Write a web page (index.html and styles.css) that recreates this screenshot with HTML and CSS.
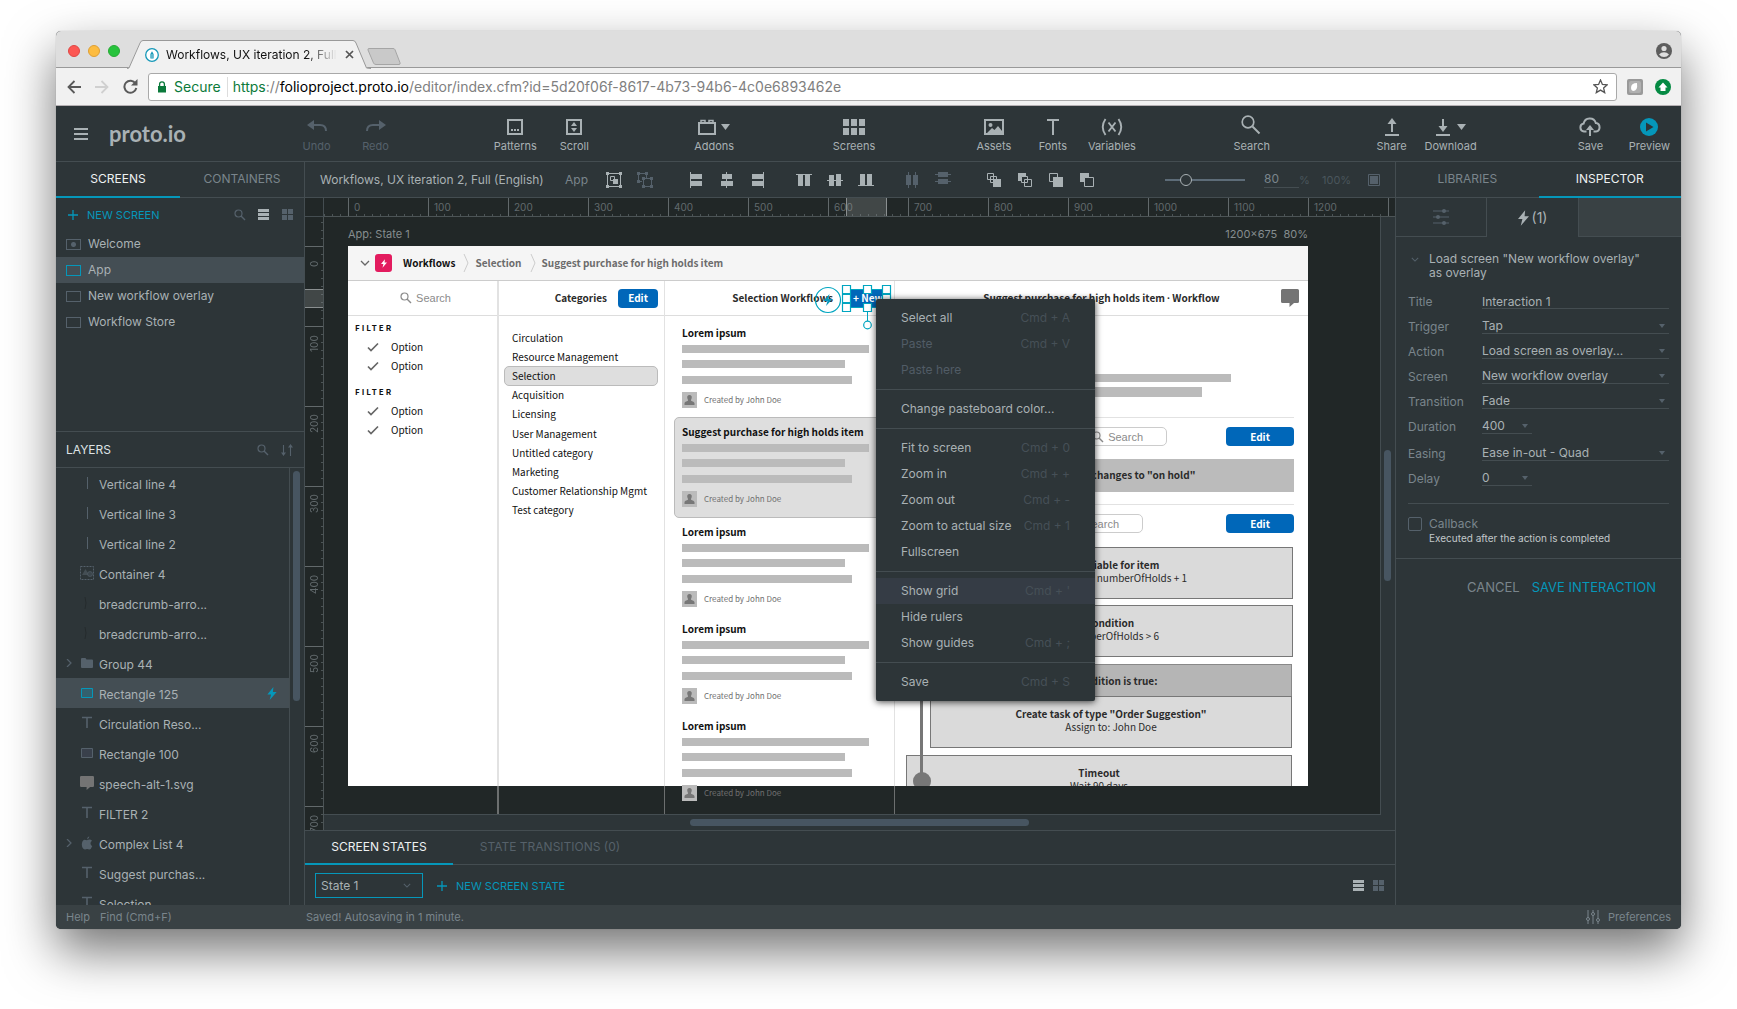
FILE: index.html
```html
<!DOCTYPE html>
<html lang="en">
<head>
<meta charset="utf-8">
<title>Workflows, UX iteration 2, Full (English)</title>
<link rel="stylesheet" href="styles.css">
</head>
<body>
<svg class="defs" aria-hidden="true">
  <symbol id="i-search" viewBox="0 0 12 12"><circle cx="4.5" cy="4.5" r="3.5" fill="none" stroke="currentColor" stroke-width="1.2"/><path d="M7 7l4 4" stroke="currentColor" stroke-width="1.4"/></symbol>
  <symbol id="i-list" viewBox="0 0 12 12"><path d="M0 0h11v3H0zM0 4h11v3H0zM0 8h11v3H0z" fill="currentColor"/></symbol>
  <symbol id="i-grid" viewBox="0 0 12 12"><path d="M0 0h5v5H0zM6 0h5v5H6zM0 6h5v5H0zM6 6h5v5H6z" fill="currentColor"/></symbol>
  <symbol id="i-bolt" viewBox="0 0 10 14"><path d="M6.5 0L0 8h4l-1.5 6L10 5.5H6z" fill="currentColor"/></symbol>
  <symbol id="i-plus" viewBox="0 0 10 10"><path d="M5 0v10M0 5h10" stroke="currentColor" stroke-width="1.3"/></symbol>
  <symbol id="i-down" viewBox="0 0 10 6"><path d="M1 1l4 4 4-4" fill="none" stroke="currentColor" stroke-width="1.3"/></symbol>
  <symbol id="i-text" viewBox="0 0 14 14"><path d="M2 1.5h10M7 1.5V12" fill="none" stroke="currentColor" stroke-width="1.6"/></symbol>
  <symbol id="i-check" viewBox="0 0 12 10"><path d="M1 5.5L4 8.5L11 1.5" fill="none" stroke="currentColor" stroke-width="1.7"/></symbol>
  <symbol id="i-crumb" viewBox="0 0 6 18"><path d="M1 0l4 9-4 9" fill="none" stroke="currentColor" stroke-width="1"/></symbol>
  <symbol id="i-user" viewBox="0 0 15 16"><path d="M0 0h15v16H0z" fill="#bbb"/><path d="M7.500 3c2 0 2.500 1.400 2.200 3-.2 1-.7 1.500-.7 2.300 0 1.200 3.500 1.200 3.500 3V13h-10v-1.700c0-1.800 3.500-1.800 3.500-3C6 7.500 5.500 7 5.300 6 5 4.400 5.500 3 7.500 3z" fill="#777"/></symbol>
  <symbol id="i-speech" viewBox="0 0 18 18"><path d="M1.500 0h15Q18 0 18 1.500v11Q18 14 16.500 14H13l-4.500 4V14h-7Q0 14 0 12.500v-11Q0 0 1.500 0z" fill="currentColor"/></symbol>
</svg>

<div class="window">
  <header class="chrome">
    <div class="tabstrip">
      <div class="lights"><i class="red"></i><i class="amber"></i><i class="green"></i></div>
      <div class="tab">
        <svg class="tab-shape" viewBox="0 0 244 29" preserveAspectRatio="none" aria-hidden="true"><path d="M0 28.500Q2 28 3 26L12.500 3Q13.500.5 16 .5H226q2 0 3 2.500l9.500 23q1.500 2.500 5 2.500V29H0z" fill="#f1f1f1" stroke="none"/><path d="M0 28.500L2 28L13 3Q14 .5 16 .5H226q2 0 3 2.500l10.500 25 4.500.5" fill="none" stroke="#999"/></svg>
        <svg class="fav" viewBox="0 0 14 14" width="14" height="14"><circle cx="7" cy="7" r="6.300" fill="#fff" stroke="#1598b8" stroke-width="1.300"/><path d="M5.400 10.500V6L7 3.200 8.600 6v4.500z" fill="#1598b8"/><path d="M7 6v4" stroke="#fff" stroke-width=".6"/></svg>
        <span class="tab-title">Workflows, UX iteration 2, Full</span>
        <button class="plain tab-close" aria-label="Close tab"><svg width="9" height="9" viewBox="0 0 9 9"><path d="M1 1l7 7M8 1L1 8" stroke="#555" stroke-width="1.700"/></svg></button>
      </div>
      <button class="plain newtab" aria-label="New tab"><svg width="34" height="17" viewBox="0 0 34 17"><path d="M2 .5h24q1.500 0 2 1.200l5 13q.6 1.800-1 1.800H9q-1.800 0-2.500-1.500L1 2Q.6.5 2 .5z" fill="#c9c9c9" stroke="#a5a5a5"/></svg></button>
      <svg class="profile" width="16" height="16" viewBox="0 0 16 16"><circle cx="8" cy="8" r="8" fill="#5d5d5d"/><circle cx="8" cy="5.500" r="2.600" fill="#dedede"/><path d="M3 11.500Q5 9.300 8 9.300t5 2.200Q11 14 8 14t-5-2.500z" fill="#dedede"/></svg>
    </div>
    <div class="navbar">
      <button class="plain" aria-label="Back"><svg width="14" height="14" viewBox="0 0 14 14"><path d="M14 7H1.500M7.500 1L1.500 7l6 6" fill="none" stroke="#5a5a5a" stroke-width="1.800"/></svg></button>
      <button class="plain" aria-label="Forward"><svg width="14" height="14" viewBox="0 0 14 14"><path d="M0 7h12.500M6.500 1l6 6-6 6" fill="none" stroke="#d0d0d0" stroke-width="1.800"/></svg></button>
      <button class="plain" aria-label="Reload"><svg width="15" height="15" viewBox="0 0 15 15"><path d="M12.500 4.500A6 6 0 1 0 13.300 9" fill="none" stroke="#5a5a5a" stroke-width="2"/><path d="M14.500 0v6.500H8z" fill="#5a5a5a"/></svg></button>
      <div class="omnibox">
        <svg width="10" height="12" viewBox="0 0 10 12"><path d="M1 5h8v6.500H1z" fill="#0b7a3b"/><path d="M2.600 5.500V3.200a2.400 2.400 0 0 1 4.800 0v2.300" fill="none" stroke="#0b7a3b" stroke-width="1.300"/></svg>
        <span class="secure">Secure</span>
        <span class="url"><b>https</b>://<em>folioproject.proto.io</em>/editor/index.cfm?id=5d20f06f-8617-4b73-94b6-4c0e6893462e</span>
        <svg width="15" height="15" viewBox="0 0 15 15"><path d="M7.500 1l1.900 4.400 4.800.4-3.600 3.100 1.100 4.700-4.200-2.500-4.200 2.500 1.100-4.700L.8 5.800l4.800-.4z" fill="none" stroke="#555" stroke-width="1.300"/></svg>
      </div>
      <svg width="16" height="16" viewBox="0 0 16 16"><rect width="16" height="16" rx="2" fill="#999"/><rect x="2" y="2" width="12" height="12" rx="2" fill="#b0b0b0"/><path d="M4 9Q4 4 10 4q1 8-4 8-2-.5-2-3z" fill="#fff"/></svg>
      <svg width="16" height="16" viewBox="0 0 16 16"><circle cx="8" cy="8" r="8" fill="#058a43"/><path d="M8 3.500l4.500 5H10.500v3.500h-5V8.500h-2z" fill="#fff"/></svg>
    </div>
  </header>

  <div class="topbar">
    <div class="brand">
      <button class="plain" aria-label="Menu"><svg width="14" height="12" viewBox="0 0 14 12"><path d="M0 1h14M0 6h14M0 11h14" stroke="#a9b1b4" stroke-width="2"/></svg></button>
      <span class="logo">proto.io</span>
    </div>
    <nav class="tools">
      <div class="group">
        <button class="tool off"><svg width="20" height="20" viewBox="0 0 20 20"><path d="M0 8l7-5v10z" fill="currentColor"/><path d="M6 8h7q6 0 6 6" fill="none" stroke="currentColor" stroke-width="2"/></svg>Undo</button>
        <button class="tool off"><svg width="20" height="20" viewBox="0 0 20 20"><path d="M20 8l-7-5v10z" fill="currentColor"/><path d="M14 8H7q-6 0-6 6" fill="none" stroke="currentColor" stroke-width="2"/></svg>Redo</button>
      </div>
      <div class="group">
        <button class="tool"><svg width="20" height="20" viewBox="0 0 20 20"><path d="M3 3h14v14H3z" fill="none" stroke="currentColor" stroke-width="2"/><path d="M6 12h2v2H6zM9 12h2v2H9zM12 12h2v2h-2z" fill="currentColor"/></svg>Patterns</button>
        <button class="tool"><svg width="20" height="20" viewBox="0 0 20 20"><path d="M3 3h14v14H3z" fill="none" stroke="currentColor" stroke-width="2"/><path d="M10 5l3 4H7zM10 15l3-4H7z" fill="currentColor"/></svg>Scroll</button>
      </div>
      <div class="group">
        <button class="tool"><svg width="32" height="20" viewBox="0 0 32 20"><path d="M1 6h16v11H1z" fill="none" stroke="currentColor" stroke-width="2"/><path d="M3 5V3.500h4V5M11 5V3.500h4V5" fill="none" stroke="currentColor" stroke-width="1.500"/><path d="M23 7h9l-4.500 6z" fill="currentColor"/></svg>Addons</button>
      </div>
      <div class="group">
        <button class="tool"><svg width="22" height="20" viewBox="0 0 22 20"><path d="M0 2h6v7H0zM8 2h6v7H8zM16 2h6v7h-6zM0 11h6v7H0zM8 11h6v7H8zM16 11h6v7h-6z" fill="currentColor"/></svg>Screens</button>
      </div>
      <div class="group">
        <button class="tool"><svg width="20" height="20" viewBox="0 0 20 20"><path d="M1 3h18v14H1z" fill="none" stroke="currentColor" stroke-width="2"/><circle cx="6.500" cy="8" r="2" fill="currentColor"/><path d="M3 16l5-5 2.500 2L14 9l4 5v2z" fill="currentColor"/></svg>Assets</button>
        <button class="tool"><svg width="12" height="20" viewBox="0 0 12 20"><path d="M0 3h12M6 3v15" stroke="currentColor" stroke-width="2"/></svg>Fonts</button>
        <button class="tool"><svg width="22" height="20" viewBox="0 0 22 20"><path d="M4.500 2Q-1 10 4.500 18M17.500 2Q23 10 17.500 18M7.500 5.500l7 9M14.500 5.500l-7 9" fill="none" stroke="currentColor" stroke-width="1.900"/></svg>Variables</button>
      </div>
      <div class="group">
        <button class="tool"><svg width="20" height="20" viewBox="0 0 20 20"><circle cx="6" cy="5" r="5.800" fill="none" stroke="currentColor" stroke-width="1.700"/><path d="M10.500 9.500l7 7" stroke="currentColor" stroke-width="2"/></svg>Search</button>
      </div>
      <div class="group">
        <button class="tool"><svg width="16" height="20" viewBox="0 0 16 20"><path d="M1 18h14M8 5v10" stroke="currentColor" stroke-width="2"/><path d="M8 1l4.500 6h-9z" fill="currentColor"/></svg>Share</button>
        <button class="tool"><svg width="30" height="20" viewBox="0 0 30 20"><path d="M0 18h14M7 2v9" stroke="currentColor" stroke-width="2"/><path d="M7 15l4.500-6h-9z" fill="currentColor"/><path d="M21 7h9l-4.500 6z" fill="currentColor"/></svg>Download</button>
      </div>
      <div class="group">
        <button class="tool"><svg width="22" height="20" viewBox="0 0 22 20"><path d="M7.500 14.500H5A4 4 0 0 1 4.600 6.600 6.300 6.300 0 0 1 16.800 6a4.300 4.300 0 0 1 .2 8.500h-2.500" fill="none" stroke="currentColor" stroke-width="2"/><path d="M11 19V12" stroke="currentColor" stroke-width="2"/><path d="M11 8l4 5H7z" fill="currentColor"/></svg>Save</button>
        <button class="tool"><svg width="20" height="20" viewBox="0 0 20 20"><circle cx="10" cy="10" r="9" fill="#0597ba"/><path d="M7 5.500v9l7.500-4.500z" fill="#2c3437"/></svg>Preview</button>
      </div>
    </nav>
  </div>

  <div class="body">
    <aside class="left">
      <div class="tabs two"><button class="on">SCREENS</button><button>CONTAINERS</button></div>
      <div class="newrow">
        <button class="add"><svg width="10" height="10"><use href="#i-plus"/></svg>NEW SCREEN</button>
        <svg class="dim" width="12" height="12"><use href="#i-search"/></svg>
        <svg class="lit" width="12" height="12"><use href="#i-list"/></svg>
        <svg class="dim" width="12" height="12"><use href="#i-grid"/></svg>
      </div>
      <ul class="screens">
        <li><i class="frame dot"></i>Welcome</li>
        <li class="sel"><i class="frame"></i>App</li>
        <li><i class="frame"></i>New workflow overlay</li>
        <li><i class="frame"></i>Workflow Store</li>
      </ul>
      <div class="layhead">
        <h2>LAYERS</h2>
        <svg class="dim" width="12" height="12"><use href="#i-search"/></svg>
        <svg class="dim" width="12" height="12" viewBox="0 0 12 12"><path d="M2.500 1v9M9.500 2v10" stroke="currentColor" stroke-width="1.100"/><path d="M0 8.500h5L2.500 12zM7 3.500h5L9.500 0z" fill="currentColor"/></svg>
      </div>
      <div class="layers">
        <ul>
          <li><i></i><b class="vline"></b><span>Vertical line 4</span></li>
          <li><i></i><b class="vline"></b><span>Vertical line 3</span></li>
          <li><i></i><b class="vline"></b><span>Vertical line 2</span></li>
          <li><i></i><svg width="14" height="14" viewBox="0 0 14 14"><path d="M.5.5h13v13H.5z" fill="none" stroke="currentColor" stroke-dasharray="2 1"/><path d="M2 9l3.500-6L9 9z" fill="#444e54"/><circle cx="10" cy="8" r="2.500" fill="#3c464c" stroke="currentColor" stroke-width=".6"/></svg><span>Container 4</span></li>
          <li><i></i><svg width="14" height="14" viewBox="0 0 14 14"><path d="M5 1q2 6 0 12" fill="none" stroke="#252b2d"/></svg><span>breadcrumb-arro...</span></li>
          <li><i></i><svg width="14" height="14" viewBox="0 0 14 14"><path d="M5 1q2 6 0 12" fill="none" stroke="#252b2d"/></svg><span>breadcrumb-arro...</span></li>
          <li><i class="tw"><svg width="6" height="8" viewBox="0 0 6 8"><path d="M1 0l4 4-4 4" fill="none" stroke="currentColor" stroke-width="1.200"/></svg></i><svg width="14" height="14" viewBox="0 0 14 14"><path d="M1 3q0-1 1-1h3.500l1 1.500H12q1 0 1 1V11q0 1-1 1H2q-1 0-1-1z" fill="currentColor"/></svg><span>Group 44</span></li>
          <li class="sel"><i></i><svg width="14" height="14" viewBox="0 0 14 14"><path d="M1.500 2.500h11v9h-11z" fill="#33606e" stroke="#0597ba"/></svg><span>Rectangle 125</span><svg class="zap" width="10" height="13"><use href="#i-bolt"/></svg></li>
          <li><i></i><svg width="14" height="14"><use href="#i-text"/></svg><span>Circulation Reso...</span></li>
          <li><i></i><svg width="14" height="14" viewBox="0 0 14 14"><path d="M1.500 2.500h11v9h-11z" fill="#39404b" stroke="currentColor"/></svg><span>Rectangle 100</span></li>
          <li><i></i><svg class="grey" width="14" height="14"><use href="#i-speech"/></svg><span>speech-alt-1.svg</span></li>
          <li><i></i><svg width="14" height="14"><use href="#i-text"/></svg><span>FILTER 2</span></li>
          <li><i class="tw"><svg width="6" height="8" viewBox="0 0 6 8"><path d="M1 0l4 4-4 4" fill="none" stroke="currentColor" stroke-width="1.200"/></svg></i><svg width="14" height="14" viewBox="0 0 14 14"><path d="M7 4.200Q9 3 10.800 3.800q.8.300 1.200 1Q10.300 6 10.500 7.800q.2 1.700 1.800 2.200-1.300 3.500-3 3.400Q8 12.800 7 12.900t-2 .5Q2 13 1.800 8.500 2 4.500 4.500 3.800 6 3.800 7 4.200zM7 3.500Q7 1 9.300.3 9.500 2.800 7 3.500z" fill="currentColor"/></svg><span>Complex List 4</span></li>
          <li><i></i><svg width="14" height="14"><use href="#i-text"/></svg><span>Suggest purchas...</span></li>
          <li><i></i><svg width="14" height="14"><use href="#i-text"/></svg><span>Selection</span></li>
        </ul>
        <div class="vscroll"><i></i></div>
      </div>
    </aside>

    <main class="center">
      <div class="editbar">
        <span class="doc">Workflows, UX iteration 2, Full (English)</span>
        <span class="crumb">App</span>
        <div class="icons">
          <button aria-label="Group"><svg width="16" height="16" viewBox="0 0 16 16"><path d="M1.500 1.500h13v13h-13z" fill="none" stroke="currentColor"/><path d="M0 0h3v3H0zM13 0h3v3h-3zM0 13h3v3H0zM13 13h3v3h-3zM7 7h5v5H7z" fill="currentColor"/><path d="M4.500 4.500h4v4h-4z" fill="none" stroke="currentColor"/></svg></button>
          <button class="off" aria-label="Ungroup"><svg width="16" height="16" viewBox="0 0 16 16"><path d="M5 9.500H1.500v-8h8V6M6.500 6.500h8v8h-8z" fill="none" stroke="currentColor"/><path d="M0 0h3v3H0zM8 0h3v3H8zM0 8h3v3H0zM5 5h3v3H5zM13 5h3v3h-3zM5 13h3v3H5zM13 13h3v3h-3z" fill="currentColor"/></svg></button>
        </div>
        <div class="icons">
          <button aria-label="Align left"><svg width="12" height="16" viewBox="0 0 12 16"><path d="M0 0h1v16H0zM1 2h11v5H1zM1 9h11v5H1z" fill="currentColor"/></svg></button>
          <button aria-label="Align centre"><svg width="12" height="16" viewBox="0 0 12 16"><path d="M5 0h1v16H5zM1 2h10v5H1zM0 9h12v5H0z" fill="currentColor"/></svg></button>
          <button aria-label="Align right"><svg width="12" height="16" viewBox="0 0 12 16"><path d="M11 0h1v16h-1zM0 2h11v5H0zM0 9h11v5H0z" fill="currentColor"/></svg></button>
        </div>
        <div class="icons near">
          <button aria-label="Align top"><svg width="16" height="12" viewBox="0 0 16 12"><path d="M0 0h16v1H0zM2 1h5v11H2zM9 1h5v11H9z" fill="currentColor"/></svg></button>
          <button aria-label="Align middle"><svg width="16" height="12" viewBox="0 0 16 12"><path d="M0 6h16v1H0zM2 1h5v11H2zM9 0h5v12H9z" fill="currentColor"/></svg></button>
          <button aria-label="Align bottom"><svg width="16" height="12" viewBox="0 0 16 12"><path d="M0 11h16v1H0zM2 0h5v11H2zM9 0h5v11H9z" fill="currentColor"/></svg></button>
        </div>
        <div class="icons near">
          <button class="off" aria-label="Distribute horizontally"><svg width="12" height="16" viewBox="0 0 12 16"><path d="M2 0h1v16H2zM9 0h1v16H9zM0 3h5v10H0zM7 3h5v10H7z" fill="currentColor"/></svg></button>
          <button class="off" aria-label="Distribute vertically"><svg width="16" height="12" viewBox="0 0 16 12"><path d="M0 2h16v1H0zM0 9h16v1H0zM3 0h10v5H3zM3 7h10v5H3z" fill="currentColor"/></svg></button>
        </div>
        <div class="icons">
          <button aria-label="Bring to front"><svg width="14" height="14" viewBox="0 0 14 14"><path d="M.5.5h6v6h-6zM3.500 3.500h6v6h-6z" fill="#2c3437" stroke="currentColor"/><path d="M6 6h8v8H6z" fill="currentColor"/></svg></button>
          <button aria-label="Send to back"><svg width="14" height="14" viewBox="0 0 14 14"><path d="M0 0h8v8H0z" fill="currentColor"/><path d="M3.500 3.500h6v6h-6zM6.500 6.500h7v7h-7z" fill="#2c3437" stroke="currentColor"/></svg></button>
          <button aria-label="Bring forward"><svg width="14" height="14" viewBox="0 0 14 14"><path d="M.5.5h8v8h-8z" fill="none" stroke="currentColor"/><path d="M4 4h10v10H4z" fill="currentColor"/></svg></button>
          <button aria-label="Send backward"><svg width="14" height="14" viewBox="0 0 14 14"><path d="M0 0h9v9H0z" fill="currentColor"/><path d="M4.500 4.500h9v9h-9z" fill="#2c3437" stroke="currentColor"/></svg></button>
        </div>
        <input class="range" type="range" min="0" max="80" value="18" aria-label="Zoom level">
        <input class="zoomval" type="text" value="80" aria-label="Zoom percent"><span class="pct">%</span>
        <span class="hundred">100%</span>
        <svg class="fit" width="12" height="12" viewBox="0 0 12 12"><path d="M.5.5h11v11H.5z" fill="none" stroke="currentColor"/><path d="M2 2h8v8H2z" fill="currentColor"/></svg>
      </div>

      <div class="stage">
        <div class="corner"></div>
        <div class="hruler"><i class="mark"></i>
          <span>0</span><span>100</span><span>200</span><span>300</span><span>400</span><span>500</span><span>600</span><span>700</span><span>800</span><span>900</span><span>1000</span><span>1100</span><span>1200</span><span></span>
        </div>
        <div class="vruler"><i class="mark"></i>
          <span><b>0</b></span><span><b>100</b></span><span><b>200</b></span><span><b>300</b></span><span><b>400</b></span><span><b>500</b></span><span><b>600</b></span><span><b>700</b></span>
        </div>
        <div class="viewport">
          <div class="boardhead"><span>App: State 1</span><span>1200×675&nbsp; 80%</span></div>
          <div class="board">
            <div class="crumbs">
              <svg class="g7" width="10" height="6"><use href="#i-down"/></svg>
              <span class="appicon"><svg width="6" height="9"><use href="#i-bolt"/></svg></span>
              <strong>Workflows</strong>
              <svg class="gc" width="6" height="18"><use href="#i-crumb"/></svg>
              <a href="#selection">Selection</a>
              <svg class="gc" width="6" height="18"><use href="#i-crumb"/></svg>
              <a href="#item">Suggest purchase for high holds item</a>
            </div>
            <div class="cols">
              <section class="c1">
                <div class="chead mid"><span class="find"><svg width="12" height="12"><use href="#i-search"/></svg>Search</span></div>
                <h4>FILTER</h4>
                <p><svg width="12" height="10"><use href="#i-check"/></svg>Option</p>
                <p><svg width="12" height="10"><use href="#i-check"/></svg>Option</p>
                <h4 class="again">FILTER</h4>
                <p><svg width="12" height="10"><use href="#i-check"/></svg>Option</p>
                <p><svg width="12" height="10"><use href="#i-check"/></svg>Option</p>
              </section>
              <section class="c2">
                <div class="chead end"><strong>Categories</strong><button class="blue">Edit</button></div>
                <ul>
                  <li>Circulation</li><li>Resource Management</li><li class="on">Selection</li><li>Acquisition</li><li>Licensing</li><li>User Management</li><li>Untitled category</li><li>Marketing</li><li>Customer Relationship Mgmt</li><li>Test category</li>
                </ul>
              </section>
              <section class="c3">
                <div class="chead end"><strong>Selection Workflows</strong><button class="blue sharp">+ New</button></div>
                <div class="cards">
                  <article><h3>Lorem ipsum</h3><i></i><i></i><i></i><footer><svg width="15" height="16"><use href="#i-user"/></svg>Created by John Doe</footer></article>
                  <article class="on"><h3>Suggest purchase for high holds item</h3><i></i><i></i><i></i><footer><svg width="15" height="16"><use href="#i-user"/></svg>Created by John Doe</footer></article>
                  <article><h3>Lorem ipsum</h3><i></i><i></i><i></i><footer><svg width="15" height="16"><use href="#i-user"/></svg>Created by John Doe</footer></article>
                  <article><h3>Lorem ipsum</h3><i></i><i></i><i></i><footer><svg width="15" height="16"><use href="#i-user"/></svg>Created by John Doe</footer></article>
                  <article><h3>Lorem ipsum</h3><i></i><i></i><i></i><footer><svg width="15" height="16"><use href="#i-user"/></svg>Created by John Doe</footer></article>
                </div>
              </section>
              <section class="c4">
                <div class="chead mid"><strong>Suggest purchase for high holds item <span class="sep">·</span> Workflow</strong><svg class="talk" width="18" height="18"><use href="#i-speech"/></svg></div>
                <div class="flow">
                  <div class="lines"><i></i><i></i></div>
                  <div class="bar"><span class="find box"><svg width="12" height="12"><use href="#i-search"/></svg>Search</span><button class="blue wide">Edit</button></div>
                  <div class="banner">When item status changes to "on hold"</div>
                  <div class="bar rule"><span class="find box short"><svg width="12" height="12"><use href="#i-search"/></svg>Search</span><button class="blue wide">Edit</button></div>
                  <div class="step"><strong>Update variable for item</strong>numberOfHolds = numberOfHolds + 1</div>
                  <div class="step"><strong>Test condition</strong>When numberOfHolds &gt; 6</div>
                  <div class="branch">
                    <div class="cond">If condition is true:</div>
                    <div class="step"><strong>Create task of type "Order Suggestion"</strong>Assign to: John Doe</div>
                  </div>
                  <div class="step last"><strong>Timeout</strong>Wait 90 days</div>
                </div>
              </section>
            </div>
            <svg class="handles" width="74" height="46" viewBox="0 0 74 46">
              <circle cx="14" cy="17" r="12.500" fill="none" stroke="#00a5c0" stroke-width="1.200"/>
              <path d="M15.500 11l-6 7h4l-1.500 5 6.500-7h-4z" fill="#0597ba"/>
              <path d="M32.500 6.500h40v18h-40zM53.500 24v14" fill="none" stroke="#00a5c0"/>
              <g fill="#fff" stroke="#00a5c0" stroke-width="1.200"><path d="M28.500 2.500h8v8h-8zM49.500 2.500h8v8h-8zM68.500 2.500h8v8h-8zM28.500 11.500h8v8h-8zM68.500 11.500h8v8h-8zM28.500 20.500h8v8h-8zM49.500 20.500h8v8h-8z"/><circle cx="53.500" cy="42" r="3.800"/></g>
            </svg>
          </div>
          <div class="menu" role="menu">
            <button>Select all<kbd>Cmd + A</kbd></button>
            <button disabled>Paste<kbd>Cmd + V</kbd></button>
            <button disabled>Paste here</button>
            <hr>
            <button>Change pasteboard color...</button>
            <hr>
            <button>Fit to screen<kbd>Cmd + 0</kbd></button>
            <button>Zoom in<kbd>Cmd + +</kbd></button>
            <button>Zoom out<kbd>Cmd + -</kbd></button>
            <button>Zoom to actual size<kbd>Cmd + 1</kbd></button>
            <button>Fullscreen</button>
            <hr>
            <button class="hover">Show grid<kbd>Cmd + '</kbd></button>
            <button>Hide rulers</button>
            <button>Show guides<kbd>Cmd + ;</kbd></button>
            <hr>
            <button>Save<kbd>Cmd + S</kbd></button>
          </div>
        </div>
        <div class="vtrack"><i></i></div>
        <div class="htrack"><i></i></div>
      </div>

      <div class="tabs states"><button class="on">SCREEN STATES</button><button>STATE TRANSITIONS (0)</button></div>
      <div class="staterow">
        <label class="statepick"><select aria-label="State"><option>State 1</option></select><svg width="8" height="5"><use href="#i-down"/></svg></label>
        <button class="add"><svg width="10" height="10"><use href="#i-plus"/></svg>NEW SCREEN STATE</button>
        <svg class="lit" width="12" height="12"><use href="#i-list"/></svg>
        <svg class="dim" width="12" height="12"><use href="#i-grid"/></svg>
      </div>
    </main>

    <aside class="right">
      <div class="tabs two"><button>LIBRARIES</button><button class="on">INSPECTOR</button></div>
      <div class="subtabs">
        <button aria-label="Properties"><svg class="dim" width="16" height="16" viewBox="0 0 16 16"><path d="M0 2h16M0 8h16M0 14h16" stroke="currentColor" stroke-width="1.200"/><g fill="currentColor"><circle cx="11" cy="2" r="2"/><circle cx="5" cy="8" r="2"/><circle cx="11" cy="14" r="2"/></g></svg></button>
        <button class="on"><svg width="11" height="16"><use href="#i-bolt"/></svg>(1)</button>
        <span></span>
      </div>
      <form class="inspect">
        <h3><svg width="8" height="5"><use href="#i-down"/></svg>Load screen "New workflow overlay" as overlay</h3>
        <div class="field"><label for="f1">Title</label><input id="f1" type="text" value="Interaction 1"></div>
        <div class="field"><label for="f2">Trigger</label><div class="pick"><select id="f2"><option>Tap</option></select></div></div>
        <div class="field"><label for="f3">Action</label><div class="pick"><select id="f3"><option>Load screen as overlay...</option></select></div></div>
        <div class="field"><label for="f4">Screen</label><div class="pick"><select id="f4"><option>New workflow overlay</option></select></div></div>
        <div class="field"><label for="f5">Transition</label><div class="pick"><select id="f5"><option>Fade</option></select></div></div>
        <div class="field"><label for="f6">Duration</label><div class="pick small"><select id="f6"><option>400</option></select></div></div>
        <div class="field gap"><label for="f7">Easing</label><div class="pick"><select id="f7"><option>Ease in-out - Quad</option></select></div></div>
        <div class="field"><label for="f8">Delay</label><div class="pick small"><select id="f8"><option>0</option></select></div></div>
        <div class="callback"><input id="cb" type="checkbox"><label for="cb">Callback</label><small>Executed after the action is completed</small></div>
      </form>
      <div class="actions"><button>CANCEL</button><button class="go">SAVE INTERACTION</button></div>
    </aside>
  </div>

  <footer class="status">
    <a href="#help">Help</a><a href="#find">Find (Cmd+F)</a>
    <span>Saved! Autosaving in 1 minute.</span>
    <button class="plain prefs"><svg width="14" height="14" viewBox="0 0 14 14"><path d="M2 0v14M7 0v14M12 0v14" stroke="currentColor" stroke-width="1"/><g fill="#394144" stroke="currentColor"><circle cx="2" cy="9" r="1.500"/><circle cx="7" cy="4" r="1.500"/><circle cx="12" cy="10" r="1.500"/></g></svg>Preferences</button>
  </footer>
</div>
</body>
</html>
```
FILE: styles.css
```css
* { box-sizing: border-box; }
:root {
  --panel: #2d3538;
  --dark: #212727;
  --line: #444d51;
  --text: #a9b1b4;
  --mute: #7a858c;
  --dim: #55616b;
  --sel: #444e54;
  --accent: #0597ba;
  --ui: Inter, "Liberation Sans", sans-serif;
  --proto: "Noto Sans CJK SC", "Open Sans", sans-serif;
}
body {
  margin: 0;
  padding: 31px 56px 80px;
  background: #fff;
  font: 12px/16px var(--ui);
  color: var(--text);
}
ul { list-style: none; margin: 0; padding: 0; }
h2, h3, h4, p { margin: 0; font-size: inherit; font-weight: inherit; }
button, input, select { font: inherit; color: inherit; background: none; border: 0; padding: 0; margin: 0; outline: 0; border-radius: 0; }
select { appearance: none; }
a { color: inherit; text-decoration: none; }
svg { display: block; flex: none; }
.defs { position: absolute; width: 0; height: 0; }
.dim { color: var(--dim); }
.lit { color: var(--text); }
.plain { display: flex; align-items: center; }

.window {
  display: flex;
  flex-direction: column;
  height: calc(100vh - 111px);
  border-radius: 5px;
  overflow: hidden;
  background: var(--panel);
  box-shadow: 0 0 1px rgba(0,0,0,.35), 0 22px 50px rgba(0,0,0,.55);
}

/* Browser chrome */
.tabstrip { display: flex; height: 37px; background: #dedede; border-bottom: 1px solid #999; padding: 0 9px 0 12px; }
.lights { display: flex; gap: 8px; padding-top: 14px; width: 59px; }
.lights i { width: 12px; height: 12px; border-radius: 50%; border: 1px solid; }
.lights .red { background: #fc5753; border-color: #df4744; }
.lights .amber { background: #fdbc40; border-color: #de9f34; }
.lights .green { background: #27c33c; border-color: #27aa35; }
.tab { display: flex; align-items: center; width: 244px; height: 29px; margin-top: 9px; padding: 0 17px 0 18px; position: relative; color: #111; font-size: 12px; }
.tab-shape { position: absolute; inset: 0; width: 100%; height: 100%; }
.tab > * { z-index: 1; }
.tab > .tab-shape { z-index: 0; }
.fav { margin-right: 7px; }
.tab-title { flex: 1; overflow: hidden; white-space: nowrap; -webkit-mask-image: linear-gradient(90deg, #000 82%, transparent); mask-image: linear-gradient(90deg, #000 82%, transparent); }
.tab-close { margin: 0 0 0 8px; }
.newtab { height: 17px; margin: 17px 0 0 -4px; }
.profile { margin: 12px 0 0 auto; }
.navbar { display: flex; align-items: center; gap: 14px; height: 38px; padding: 0 10px 0 11px; background: #f1f1f1; border-bottom: 1px solid #b5b0b3; }
.navbar > svg + svg { margin-left: -2px; }
.omnibox { flex: 1; display: flex; align-items: center; height: 28px; margin: 0 -4px; padding: 0 8px; border: 1px solid #a9a9a9; border-radius: 3px; background: #fff; font-size: 14px; line-height: 20px; color: #808080; min-width: 0; }
.secure { color: #0b7a3b; margin-left: 7px; padding-right: 6px; border-right: 1px solid #ddd; }
.url { flex: 1; padding-left: 5px; white-space: nowrap; overflow: hidden; }
.url b { font-weight: 400; color: #0b7a3b; }
.url em { font-style: normal; color: #000; }

/* Application bar */
.topbar { display: flex; height: 56px; border-bottom: 1px solid var(--line); padding-right: 2px; }
.brand { display: flex; align-items: center; width: 231px; padding-left: 18px; gap: 21px; }
.logo { font: 700 22px/24px Lato, sans-serif; color: var(--text); }
.tools { flex: 1; display: flex; justify-content: space-between; }
.group { display: flex; }
.tool { display: flex; flex-direction: column; align-items: center; width: 59px; padding-top: 11px; gap: 2px; font-size: 11px; line-height: 14px; }
.tool svg { overflow: visible; }
.off { color: var(--dim); }

.body { flex: 1; display: grid; grid-template-columns: 249px minmax(0, 1fr) 286px; min-height: 0; }
.tabs { display: flex; height: 36px; flex: none; border-bottom: 1px solid var(--line); }
.tabs button { color: var(--mute); border-bottom: 2px solid transparent; margin-bottom: -1px; }
.tabs .on { color: #eef1f2; border-color: var(--accent); }
.two button { flex: 1; }

/* Left panel */
.left { display: flex; flex-direction: column; min-height: 0; border-right: 1px solid var(--line); }
.newrow { display: flex; align-items: center; height: 33px; padding: 1px 10px 0 12px; gap: 12px; }
.add { display: flex; align-items: center; gap: 9px; color: var(--accent); font-size: 11px; margin-right: auto; }
.screens { flex: none; height: 200px; }
.screens li { display: flex; align-items: center; gap: 7px; height: 26px; padding-left: 10px; }
.frame { width: 15px; height: 11px; border: 1px solid var(--dim); }
.dot { background: radial-gradient(circle, var(--dim) 2px, transparent 3px); }
.sel { background: var(--sel); }
.sel .frame { border-color: var(--accent); }
.layhead { display: flex; align-items: center; gap: 12px; height: 37px; flex: none; padding: 0 11px 0 10px; border-block: 1px solid var(--line); color: #dfe3e5; }
.layhead h2 { flex: 1; }
.layers { display: flex; flex: 1; min-height: 0; overflow: hidden; }
.layers ul { flex: 1; border-right: 1px solid var(--line); height: 450px; }
.layers li { display: flex; align-items: center; height: 30px; padding-left: 10px; color: var(--dim); }
.layers li > i { width: 14px; }
.layers li span { padding-top: 4px; margin-left: 5px; flex: 1; color: var(--text); }
.layers .grey { color: #747474; }
.layers .zap { color: var(--accent); margin-right: 12px; }
.vline { width: 14px; height: 12px; background: linear-gradient(var(--dim), var(--dim)) 7px 0 / 1px 100% no-repeat; }
.vscroll { width: 14px; padding: 3px; }
.vscroll i { display: block; width: 7px; height: 230px; border-radius: 4px; background: #475561; }

/* Editor toolbar */
.center { display: flex; flex-direction: column; min-height: 0; }
.editbar { display: flex; align-items: center; height: 36px; padding: 0 15px; border-bottom: 1px solid var(--line); flex: none; white-space: nowrap; }
.doc { width: 245px; }
.crumb { width: 33px; color: var(--mute); }
.icons { display: flex; margin-right: 20px; }
.icons:has(+ .near) { margin-right: 15px; }
.icons button { width: 31px; display: flex; justify-content: center; }
.range { appearance: none; width: 80px; height: 14px; margin: 0 19px 0 43px; background: linear-gradient(#5d6c78, #5d6c78) 0 6px / 100% 2px no-repeat; }
.range::-webkit-slider-thumb { appearance: none; width: 12px; height: 12px; border: 1px solid var(--text); border-radius: 50%; background: var(--panel); }
.zoomval { width: 35px; height: 16px; border-bottom: 1px solid var(--line); color: var(--mute); }
.pct { color: #4a555c; width: 23px; font-size: 11px; }
.hundred { color: #4a555c; flex: 1; font-size: 11px; }
.fit { color: var(--dim); }

/* Canvas with rulers */
.stage { flex: 1; display: grid; grid-template: 19px minmax(0, 1fr) 15px / 19px minmax(0, 1fr) 15px; min-height: 0; background: var(--panel); border-bottom: 1px solid var(--line); }
.corner { background: var(--dark); border: solid var(--line); border-width: 0 1px 1px 0; }
.hruler { grid-column: 2 / 4; position: relative; display: flex; overflow: hidden; padding-left: 24px; border-bottom: 1px solid #4c5456; background: repeating-linear-gradient(90deg, #4c5456 0 1px, transparent 1px 8px) 0 100% / 100% 2px no-repeat, var(--dark); font-size: 10px; line-height: 18px; color: #626a6d; }
.hruler span { flex: 0 0 80px; border-left: 1px solid #62696b; padding-left: 5px; }
.hruler .mark { position: absolute; left: 522px; width: 41px; top: 0; bottom: 0; background: rgba(150,155,155,.28); border-inline: 1px solid #8a8f90; }
.vruler { grid-row: 2 / 4; position: relative; overflow: hidden; padding-top: 29px; border-right: 1px solid #4c5456; background: repeating-linear-gradient(#4c5456 0 1px, transparent 1px 8px) 100% 5px / 2px 100% no-repeat, var(--dark); font-size: 10px; color: #626a6d; }
.vruler span { display: block; height: 80px; border-top: 1px solid #62696b; }
.vruler b { display: flex; justify-content: center; width: 18px; height: 34px; font-weight: 400; writing-mode: vertical-rl; transform: rotate(180deg); line-height: 18px; text-align: center; align-items: center; }
.vruler .mark { position: absolute; top: 72px; height: 19px; left: 0; right: 0; background: rgba(150,155,155,.28); border-block: 1px solid #8a8f90; }
.viewport { grid-area: 2 / 2; position: relative; overflow: hidden; background: var(--dark); padding-left: 24px; border-bottom: 1px solid var(--line); }
.vtrack { grid-area: 2 / 3; border-left: 1px solid var(--line); padding: 233px 3px 0; }
.vtrack i { display: block; width: 7px; height: 131px; border-radius: 4px; background: #475561; }
.htrack { grid-area: 3 / 2 / 4 / 4; padding: 4px 0 0 366px; }
.htrack i { display: block; width: 339px; height: 7px; border-radius: 4px; background: #475561; }
.boardhead { display: flex; justify-content: space-between; width: 960px; height: 29px; padding-top: 9px; font-size: 11px; color: #868d8f; }

/* Artboard: a fixed 960 by 540 design surface */
.board { width: 960px; height: 540px; position: relative; background: #fff; font: 10px/16px var(--proto); color: #111; }
.crumbs { display: flex; align-items: center; height: 35px; padding-left: 12px; background: #f5f5f5; border-bottom: 1px solid #ccc; color: #6c6c6c; }
.crumbs strong { margin-left: 11px; color: #111; font-weight: 700; }
.crumbs a { font-weight: 700; }
.g7 { color: #666; }
.gc { color: #ccc; margin: 0 6px 0 8px; }
.appicon { display: flex; align-items: center; justify-content: center; width: 17px; height: 18px; margin-left: 5px; border-radius: 3px; background: #e31c5f; color: #fff; }
.cols { display: grid; grid-template-columns: 151px 166px 230px 413px; height: 535px; }
.cols section { border-right: 1px solid rgba(194,194,194,.47); min-width: 0; }
.cols .c1 { border-right-width: 2px; }
.cols .c4 { border: 0; height: 505px; overflow: hidden; }
.chead { display: flex; align-items: center; height: 35px; border-bottom: 1px solid #ddd; position: relative; }
.mid { justify-content: center; }
.end { justify-content: flex-end; padding-right: 6px; gap: 11px; }
.c3 .end { gap: 15px; }
.chead strong { font-weight: 700; color: #2b2b2b; }
.sep { font-family: "Open Sans", sans-serif; }
.find { display: flex; align-items: center; gap: 4px; font: 12px/14px "Liberation Sans", sans-serif; font-size: 11px; color: #8b8b8b; padding-left: 6px; }
.blue { width: 40px; height: 19px; border-radius: 4px; background: #0067b9; color: #fff; font-weight: 700; line-height: 16px; }
.sharp { border-radius: 0; }
.c1 h4 { font-size: 8px; font-weight: 700; line-height: 14px; letter-spacing: 2px; margin: 5px 0 2px 7px; }
.c1 h4.again { margin-top: 10px; }
.c1 p { display: flex; align-items: center; gap: 12px; height: 19px; padding-left: 19px; }
.c1 p svg { color: #666; }
.c2 ul { display: grid; grid-template-rows: repeat(10, 1fr); height: 192px; margin: 12px 6px 0 5px; }
.c2 li { display: flex; align-items: center; padding-left: 7px; border: 1px solid transparent; white-space: nowrap; }
.c2 .on { background: #dedede; border-color: #bbb; border-radius: 5px; }
.cards { display: grid; gap: 1px; padding: 4px 7px 0 9px; }
.cards article { padding: 4px 8px 8px; }
.cards .on { padding: 5px 7px 10px; border: 1px solid #bbb; border-radius: 5px; background: #dedede; }
.cards h3 { font-weight: 700; line-height: 18px; margin-bottom: 3px; white-space: nowrap; }
.cards i { display: block; height: 8px; width: 187px; background: #bbb; margin-bottom: 8px; }
.cards i:nth-of-type(1) { margin-bottom: 7px; }
.cards i:nth-of-type(2) { width: 163px; }
.cards i:nth-of-type(3) { width: 170px; }
.cards footer { display: flex; align-items: center; gap: 7px; height: 16px; font-size: 8px; color: #707070; }
.talk { position: absolute; right: 9px; top: 8px; color: #747474; }
.flow { padding: 58px 14px 0 11px; }
.lines { height: 44px; border-bottom: 1px solid #e2e2e2; }
.lines i { display: block; width: 325px; height: 8px; margin-bottom: 5px; background: #bbb; }
.lines i + i { width: 296px; height: 10px; }
.bar { display: flex; justify-content: space-between; height: 41px; padding-top: 9px; }
.box { width: 261px; height: 19px; justify-content: flex-end; padding-right: 23px; border: 1px solid #ccc; border-radius: 5px; }
.short { width: 237px; }
.wide { width: 68px; }
.banner { height: 33px; margin-bottom: 12px; background: #bbb; text-align: center; font-weight: 700; line-height: 31px; color: #2b2b2b; }
.rule { border-top: 1px solid #e2e2e2; }
.step { display: flex; flex-direction: column; align-items: center; justify-content: center; height: 52px; margin: 0 1px 6px 0; border: 1px solid #777; background: #dadada; line-height: 13px; color: #2b2b2b; padding-bottom: 4px; }
.flow .bar + .step { margin-top: 2px; }
.branch { margin: 7px 2px 7px 24px; position: relative; }
.branch::before { content: ""; position: absolute; left: -10px; top: 0; width: 3px; height: 118px; background: #777; z-index: 1; }
.branch::after { content: ""; position: absolute; left: -17px; top: 108px; width: 18px; height: 18px; border-radius: 50%; background: #777; z-index: 1; }
.cond { height: 32px; border: 1px solid #888; border-bottom: 0; background: #b5b5b5; text-align: center; font-weight: 700; line-height: 31px; color: #2b2b2b; }
.branch .step { margin: 0; }
.last { margin-right: 2px; }
.handles { position: absolute; left: 466px; top: 37px; overflow: visible; }

/* Context menu */
.menu { position: absolute; z-index: 5; left: 552px; top: 82px; width: 219px; padding: 6px 0; background: var(--panel); border-radius: 2px; box-shadow: 0 1px 7px rgba(0,0,0,.75); }
.menu button { display: flex; justify-content: space-between; align-items: center; width: 100%; height: 26px; padding: 0 25px; white-space: nowrap; }
.menu hr { border: 0; border-top: 1px solid var(--line); margin: 6px 0; }
.menu kbd { font: inherit; color: #465057; }
.menu button:disabled { color: #515c66; }
.menu .hover { background: #353c45; }

/* Screen states */
.states { height: 34px; }
.states button { width: 194px; color: #56616a; }
.states .on { width: 148px; color: #eef1f2; }
.staterow { display: flex; align-items: center; height: 40px; padding: 1px 10px 0; gap: 8px; }
.statepick { display: flex; align-items: center; width: 108px; height: 25px; padding: 0 11px 0 5px; margin-right: 6px; border: 1px solid var(--accent); color: var(--dim); }
.statepick select { flex: 1; color: var(--text); }

/* Inspector */
.right { border-left: 1px solid var(--line); }
.subtabs { display: grid; grid-template-columns: 91px 91px 1fr; height: 39px; }
.subtabs > * { display: flex; align-items: center; justify-content: center; gap: 3px; border-bottom: 1px solid var(--line); }
.subtabs button:first-child { border-right: 1px solid var(--line); }
.subtabs .on { border-bottom: 0; font-size: 14px; }
.subtabs span { background: #394144; border-left: 1px solid var(--line); }
.inspect { padding: 15px 12px 13px; border-bottom: 1px solid var(--line); }
.inspect h3 { position: relative; padding: 0 20px 0 21px; line-height: 14px; margin-bottom: 4px; }
.inspect h3 svg { position: absolute; left: 3px; top: 5px; color: var(--dim); }
.field { display: grid; grid-template-columns: 74px 1fr; align-items: end; height: 25px; }
.field label { line-height: 14px; color: var(--mute); }
.field input, .field select { display: block; width: 100%; height: 18px; line-height: 14px; padding-top: 3px; border-bottom: 1px solid var(--line); }
.pick { position: relative; }
.pick::after { content: ""; position: absolute; right: 4px; top: 8px; border: 3px solid transparent; border-top: 4px solid var(--dim); border-bottom: 0; }
.small { width: 50px; }
.gap { margin-top: 2px; }
.callback { display: grid; grid-template-columns: 14px 1fr; column-gap: 7px; margin-top: 17px; padding-top: 13px; border-top: 1px solid var(--line); line-height: 14px; color: var(--mute); }
.callback input { appearance: none; width: 14px; height: 14px; border: 1px solid var(--dim); border-radius: 2px; }
.callback small { grid-column: 2; font-size: 10px; color: #c2c8ca; }
.actions { display: flex; justify-content: flex-end; gap: 12px; padding: 20px 25px; font-size: 13px; color: var(--mute); }
.actions .go { color: var(--accent); }

/* Status bar */
.status { display: flex; align-items: center; height: 24px; flex: none; padding: 0 10px; background: #394144; color: var(--mute); font-size: 11px; }
.status a:first-child { width: 34px; }
.status a + a { width: 206px; }
.prefs { margin-left: auto; gap: 8px; }
```
